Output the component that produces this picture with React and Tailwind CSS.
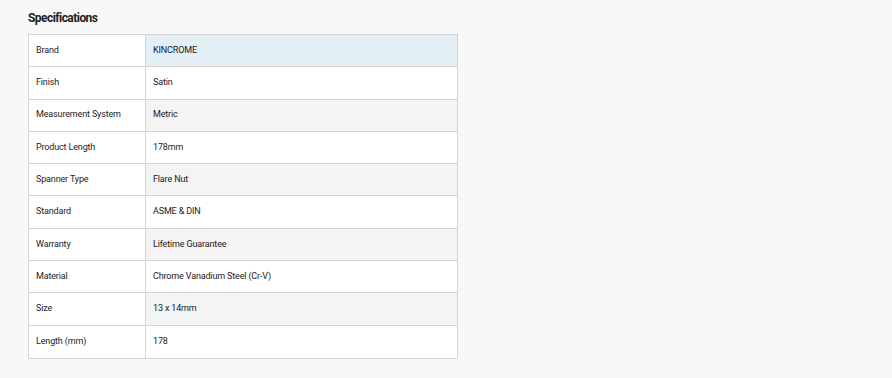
import React from 'react';

const specs = [
  ['Brand', 'KINCROME'],
  ['Finish', 'Satin'],
  ['Measurement System', 'Metric'],
  ['Product Length', '178mm'],
  ['Spanner Type', 'Flare Nut'],
  ['Standard', 'ASME & DIN'],
  ['Warranty', 'Lifetime Guarantee'],
  ['Material', 'Chrome Vanadium Steel (Cr-V)'],
  ['Size', '13 x 14mm'],
  ['Length (mm)', '178'],
];

const App = () => {
  return (
    <div className="min-h-[378px] w-full bg-[#f8f8f8] px-[28px] pt-[10px] text-[#222] font-['Roboto',sans-serif]">
      <h2 className="text-[12px] font-bold leading-[16px] tracking-[-0.55px] mb-[8px]">Specifications</h2>
      <div className="w-[430px] border border-[#d4d4d4] bg-white">
        {specs.map(([label, value], i) => {
          let valueBg = 'bg-white';
          if (i === 0) valueBg = 'bg-[#e3eef5]';
          else if (i % 2 === 0) valueBg = 'bg-[#f4f4f4]';
          return (
            <div
              key={label}
              className={`flex h-[32.3px] text-[9px] tracking-[-0.15px] ${i < specs.length - 1 ? 'border-b border-[#d4d4d4]' : ''}`}
            >
              <div className="w-[117px] shrink-0 border-r border-[#d4d4d4] px-[7px] flex items-center">{label}</div>
              <div className={`flex-1 px-[7px] flex items-center text-[#1a1a1a] ${valueBg}`}>{value}</div>
            </div>
          );
        })}
      </div>
    </div>
  );
};

export default App;
